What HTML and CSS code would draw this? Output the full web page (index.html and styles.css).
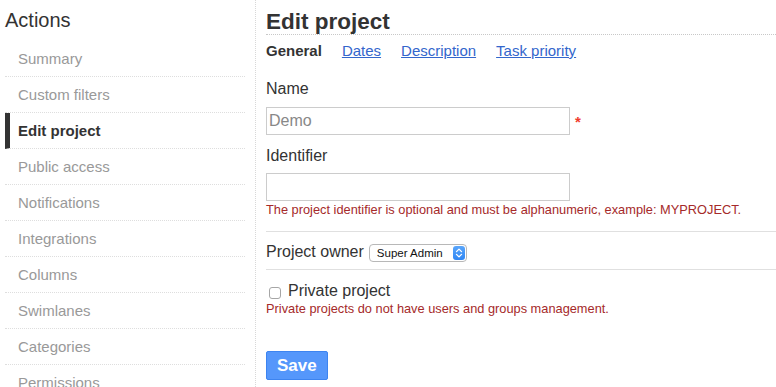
FILE: index.html
```html
<!DOCTYPE html>
<html lang="en">
<head>
<meta charset="utf-8">
<title>Edit project</title>
<link rel="stylesheet" href="styles.css">
</head>
<body>
<div class="layout">
  <aside class="sidebar">
    <h2 class="sidebar-title">Actions</h2>
    <ul class="menu">
      <li class="menu-item"><a href="#">Summary</a></li>
      <li class="menu-item"><a href="#">Custom filters</a></li>
      <li class="menu-item active"><a href="#">Edit project</a></li>
      <li class="menu-item"><a href="#">Public access</a></li>
      <li class="menu-item"><a href="#">Notifications</a></li>
      <li class="menu-item"><a href="#">Integrations</a></li>
      <li class="menu-item"><a href="#">Columns</a></li>
      <li class="menu-item"><a href="#">Swimlanes</a></li>
      <li class="menu-item"><a href="#">Categories</a></li>
      <li class="menu-item"><a href="#">Permissions</a></li>
    </ul>
  </aside>
  <main class="content">
    <h2 class="page-title">Edit project</h2>
    <ul class="tabs">
      <li class="tab tab-active">General</li>
      <li class="tab"><a href="#">Dates</a></li>
      <li class="tab"><a href="#">Description</a></li>
      <li class="tab"><a href="#">Task priority</a></li>
    </ul>
    <form class="form">
      <label class="field-label" for="name">Name</label>
      <div class="input-row">
        <input class="text-input" id="name" type="text" value="Demo">
        <span class="required">*</span>
      </div>
      <label class="field-label field-label-second" for="identifier">Identifier</label>
      <div class="input-row">
        <input class="text-input" id="identifier" type="text">
      </div>
      <p class="help help-first">The project identifier is optional and must be alphanumeric, example: MYPROJECT.</p>
      <hr class="sep sep-first">
      <div class="owner-row">
        <label class="owner-label">Project owner</label>
        <div class="select">
          <span class="select-text">Super Admin</span>
          <span class="select-arrow">
            <svg width="12" height="14" viewBox="0 0 12 14"><path d="M3.5 5.6 L6 3.1 L8.5 5.6 M3.5 8.4 L6 10.9 L8.5 8.4" fill="none" stroke="#fff" stroke-width="1.3" stroke-linecap="round" stroke-linejoin="round"/></svg>
          </span>
        </div>
      </div>
      <hr class="sep">
      <div class="check-row">
        <input class="checkbox" id="private" type="checkbox">
        <label class="check-label" for="private">Private project</label>
      </div>
      <p class="help help-tight">Private projects do not have users and groups management.</p>
      <button class="btn" type="button">Save</button>
    </form>
  </main>
</div>
</body>
</html>
```
FILE: styles.css
```css
html, body {
  margin: 0;
  padding: 0;
  background: #fff;
}
body {
  font-family: "Liberation Sans", Arial, Helvetica, sans-serif;
  color: #333;
  padding-left: 5px;
}
.layout {
  display: flex;
  min-height: 387px;
}
.sidebar {
  width: 240px;
  padding-right: 10px;
  border-right: 1px dotted #d8d8d8;
  flex: none;
}
.sidebar-title {
  font-size: 20px;
  line-height: 23px;
  font-weight: normal;
  margin: 9px 0 9px;
  color: #333;
}
.menu {
  list-style: none;
  margin: 0;
  padding: 0;
}
.menu-item {
  font-size: 15px;
  line-height: 35px;
  padding-left: 13px;
  border-bottom: 1px dotted #dedede;
}
.menu-item a {
  color: #999;
  text-decoration: none;
}
.menu-item.active {
  border-left: 5px solid #333;
  padding-left: 8px;
}
.menu-item.active a {
  color: #333;
  font-weight: bold;
}
.content {
  flex: 1;
  padding-left: 10px;
  min-width: 0;
}
.page-title {
  margin: 10px 0 0;
  font-size: 22.5px;
  line-height: 24px;
  font-weight: bold;
  color: #333;
  border-bottom: 1px dotted #c8c8c8;
}
.tabs {
  list-style: none;
  display: flex;
  gap: 20px;
  margin: 7px 0 0;
  padding: 0;
  font-size: 15px;
  line-height: 17px;
}
.tab a {
  color: #3366cc;
  text-decoration: underline;
}
.tab-active {
  font-weight: bold;
  color: #333;
}
.form {
  margin: 0;
}
.field-label {
  display: block;
  font-size: 16px;
  line-height: 18px;
  margin-top: 21px;
  color: #333;
}
.field-label-second {
  margin-top: 12px;
}
.input-row {
  display: flex;
  align-items: center;
  margin-top: 9px;
}
.field-label-second + .input-row {
  margin-top: 8px;
}
.text-input {
  box-sizing: border-box;
  width: 304px;
  height: 28px;
  margin: 0;
  padding: 0 2px;
  border: 1px solid #cccccc;
  border-radius: 0;
  font-family: "Liberation Sans", Arial, sans-serif;
  font-size: 16px;
  color: #888;
  outline: none;
}
.required {
  padding-left: 5px;
  font-size: 15px;
  line-height: 17px;
  font-weight: bold;
  color: #f03c2e;
}
.help {
  margin: 0;
  font-size: 12.8px;
  line-height: 15px;
  color: #a52a2a;
}
.help-first {
  margin-top: 1px;
}
.help-tight {
  margin-top: 1px;
}
.sep {
  margin: 0;
  height: 0;
  border: 0;
  border-top: 1px solid #e0e0e0;
}
.sep-first {
  margin-top: 14px;
}
.owner-row {
  display: flex;
  align-items: flex-start;
  padding: 8px 0 7px;
}
.owner-label {
  font-size: 16px;
  line-height: 18px;
  margin-top: 3px;
  margin-right: 5px;
}
.select {
  box-sizing: border-box;
  display: flex;
  align-items: center;
  width: 98px;
  height: 18px;
  margin-top: 4px;
  border: 1px solid #b8b8b8;
  border-radius: 4px;
  background: #fff;
}
.select-text {
  flex: 1;
  padding-left: 7px;
  font-size: 11.5px;
  line-height: 14px;
  color: #111;
  white-space: nowrap;
}
.select-arrow {
  display: flex;
  width: 12px;
  height: 14px;
  margin-right: 1px;
  border-radius: 3px;
  background: linear-gradient(#5aa6fb, #2f86f4);
}
.check-row {
  display: flex;
  align-items: flex-start;
  margin-top: 12px;
}
.checkbox {
  appearance: none;
  -webkit-appearance: none;
  box-sizing: border-box;
  width: 12px;
  height: 12px;
  margin: 5px 7px 0 3px;
  border: 1px solid #a6a6a6;
  border-radius: 3px;
  background: #fff;
}
.check-label {
  font-size: 16px;
  line-height: 18px;
  color: #333;
}
.btn {
  box-sizing: border-box;
  display: block;
  height: 29px;
  margin-top: 35px;
  padding: 0 10px;
  border: 1px solid #3d84f0;
  border-radius: 2px;
  background: #5597fb;
  color: #fff;
  font-family: "Liberation Sans", Arial, sans-serif;
  font-size: 17px;
  font-weight: bold;
  line-height: 27px;
}
```
